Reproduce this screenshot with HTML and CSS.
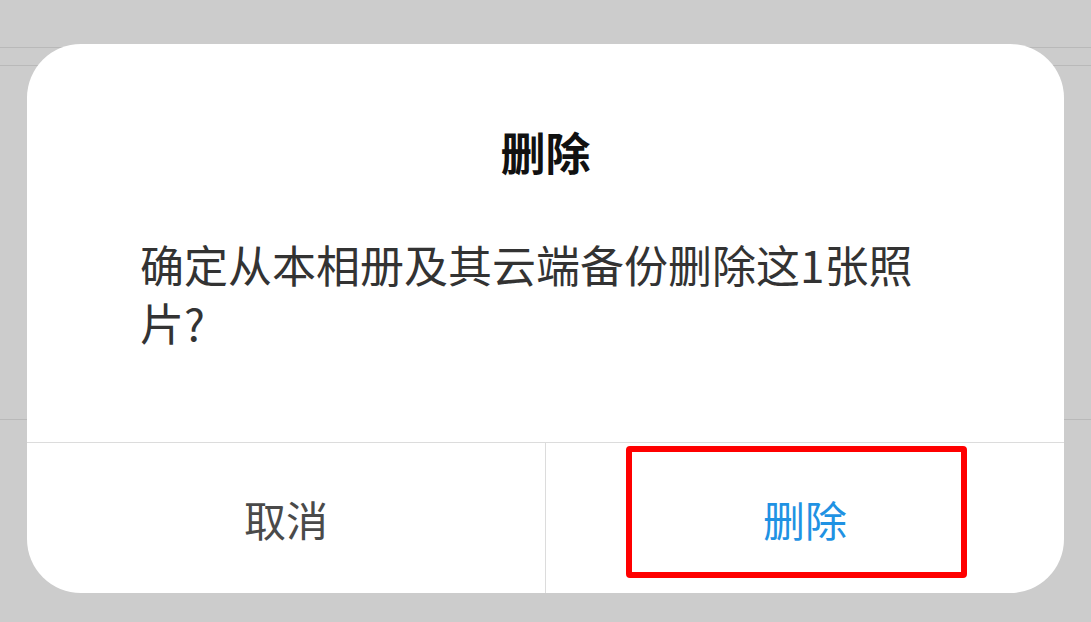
FILE: index.html
```html
<!DOCTYPE html>
<html lang="zh-CN">
<head>
  <meta charset="UTF-8" />
  <meta name="viewport" content="width=device-width, initial-scale=1.0"/>
  <title>删除照片</title>
  <link rel="stylesheet" href="styles.css">
</head>
<body>

  <div class="backdrop">
    <div class="backdrop-row top"></div>
    <div class="backdrop-row thin"></div>
    <div class="backdrop-row tall"></div>
  </div>

  <div class="dialog">
    <h1 class="dialog-title">删除</h1>
    <p class="dialog-message">确定从本相册及其云端备份删除这1张照片?</p>

    <div class="dialog-actions">
      <button class="action cancel">取消</button>
      <button class="action confirm">删除</button>
    </div>

    <div class="highlight"></div>
  </div>

</body>
</html>
```

FILE: styles.css
```css
:root {
  --backdrop: #cccccc;
  --backdrop-line: #b9b9b9;
  --divider: #dcdcdc;
  --title: #111111;
  --text: #333333;
  --muted: #4a4a4a;
  --accent: #1f92e3;
  --mark: #ff0000;
}

html, body {
  margin: 0;
  height: 100%;
}

body {
  font-family: "Noto Sans CJK SC", "Noto Sans", sans-serif;
  background-color: var(--backdrop);
  position: relative;
  overflow: hidden;
}

.backdrop-row {
  border-bottom: 1px solid var(--backdrop-line);
}

.backdrop-row.top {
  height: 47px;
}

.backdrop-row.thin {
  height: 17px;
}

.backdrop-row.tall {
  height: 353px;
}

/* el dialogo va encima del fondo */
.dialog {
  position: absolute;
  top: 44px;
  left: 27px;
  width: 1037px;
  height: 549px;
  background-color: #ffffff;
  border-radius: 54px;
  display: flex;
  flex-direction: column;
  box-sizing: border-box;
}

.dialog-title {
  margin: 0;
  padding-top: 76px;
  font-size: 45px;
  font-weight: 700;
  line-height: 63px;
  text-align: center;
  color: var(--title);
}

.dialog-message {
  margin: 52px 0 0;
  padding: 0 112px 0 113px;
  font-size: 44px;
  line-height: 58px;
  color: var(--text);
  flex: 1;
}

.dialog-actions {
  display: flex;
  height: 150px;
  border-top: 1px solid var(--divider);
}

.action {
  flex: 1;
  background: none;
  border: none;
  margin: 0;
  padding: 0;
  font-family: inherit;
  font-size: 42px;
  cursor: pointer;
}

.action.cancel {
  color: var(--muted);
  border-right: 1px solid var(--divider);
}

.action.confirm {
  color: var(--accent);
}

.highlight {
  position: absolute;
  left: 599px;
  top: 402px;
  width: 341px;
  height: 132px;
  border: 6px solid var(--mark);
  border-radius: 4px;
  box-sizing: border-box;
  pointer-events: none;
}
```
